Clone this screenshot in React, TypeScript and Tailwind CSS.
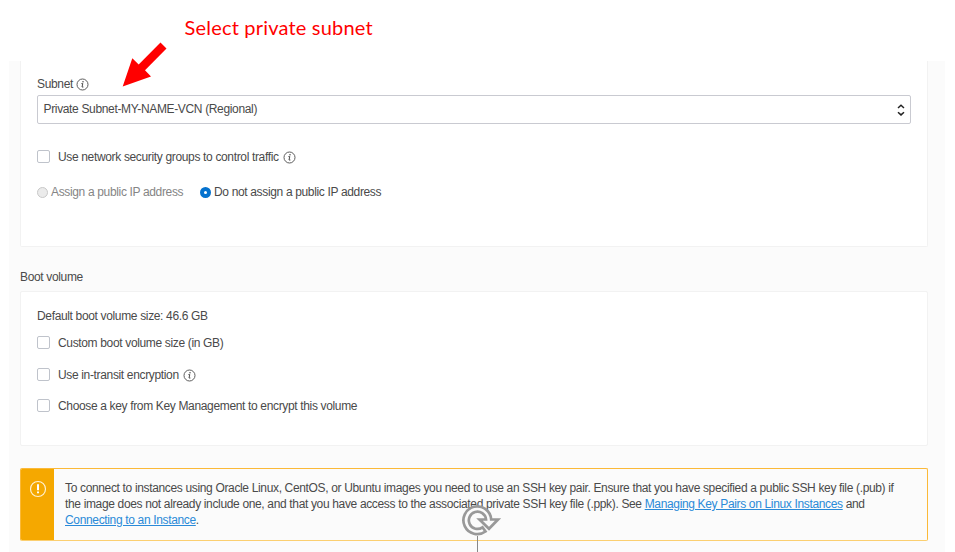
import type { ReactNode } from "react";

function InfoIcon() {
  return (
    <svg width="13" height="13" viewBox="0 0 13 13" className="mt-px shrink-0" fill="none">
      <circle cx="6.5" cy="6.5" r="5.5" stroke="#5c5c5c" strokeWidth="1" />
      <path d="M5.4 5.6H6.8L6 9H7.4" stroke="#4a4a4a" strokeWidth="1" />
      <circle cx="7" cy="3.7" r="0.75" fill="#4a4a4a" />
    </svg>
  );
}

function CheckRow({ children, info }: { children: ReactNode; info?: boolean }) {
  return (
    <label className="flex h-5 items-center">
      <span className="mr-2 mb-px size-[13px] shrink-0 rounded-[2px] border border-[#bfc3cb] bg-white" />
      <span className="mr-1">{children}</span>
      {info && <InfoIcon />}
    </label>
  );
}

function Link({ children }: { children: ReactNode }) {
  return (
    <a href="#" className="text-[#2a8ad8] underline">
      {children}
    </a>
  );
}

export default function App() {
  return (
    <div className="relative h-[552px] w-[955px] overflow-hidden bg-white font-['Liberation_Sans',Arial,sans-serif] text-[12px] tracking-[-0.345px] whitespace-nowrap text-[#4a4a4a]">
      <h1 className="h-[61px] pt-[14px] pl-[184.5px] font-['Lato',sans-serif] text-[20px] leading-[26px] tracking-[0.19px] text-[#ff0000]">
        Select private subnet
      </h1>

      <main className="ml-[9px] h-[491px] w-[936px] bg-[#fbfbfb] pl-[11px]">
        <section className="flex h-[186px] w-[908px] flex-col rounded-b-[2px] border border-t-0 border-[#f2f2f2] bg-white px-4 pt-[13px]">
          <div className="flex h-5 items-center gap-[3px]">
            <span>Subnet</span>
            <InfoIcon />
          </div>
          <div className="mt-px flex h-[29px] w-[874px] items-center justify-between rounded-[2px] border border-[#c9cad1] bg-white pr-[5px] pl-[5.5px]">
            <span className="mb-px">Private Subnet-MY-NAME-VCN (Regional)</span>
            <svg width="8" height="12" viewBox="0 0 8 12" fill="none" stroke="#222" strokeWidth="1.5">
              <path d="M1 4L4 1.3L7 4M1 8.2L4 10.9L7 8.2" />
            </svg>
          </div>
          <div className="mt-[23px]">
            <CheckRow info>Use network security groups to control traffic</CheckRow>
          </div>
          <div className="mt-[15px] flex h-5 items-center">
            <span className="mr-[3px] size-[11px] rounded-full border border-[#c8c8c8] bg-[#ebebeb]" />
            <span className="w-[149px] text-[#858585]">Assign a public IP address</span>
            <span className="mr-[3px] size-[11px] rounded-full border-4 border-[#0572ce] bg-white" />
            <span>Do not assign a public IP address</span>
          </div>
        </section>

        <h2 className="mt-5 h-6 leading-5">Boot volume</h2>

        <section className="h-[155px] w-[908px] rounded-[2px] border border-[#f2f2f2] bg-white px-4 pt-[14px]">
          <p className="h-5 leading-5">Default boot volume size: 46.6 GB</p>
          <div className="mt-[7px] flex flex-col gap-[11.5px]">
            <CheckRow>Custom boot volume size (in GB)</CheckRow>
            <CheckRow info>Use in-transit encryption</CheckRow>
            <CheckRow>Choose a key from Key Management to encrypt this volume</CheckRow>
          </div>
        </section>

        <section className="mt-[22px] flex h-[73px] w-[908px] overflow-hidden rounded-[2px] border border-[#fbb938] border-b-[#fbcf70]">
          <div className="w-[33px] shrink-0 bg-[#f5a800] pt-[11px] pl-2">
            <svg width="18" height="18" viewBox="0 0 18 18" fill="none" stroke="#fff1cf">
              <circle cx="9" cy="9" r="7.5" strokeWidth="1.2" />
              <path d="M9 4.2V10.2M9 11.5V13.2" stroke="#fff" strokeWidth="2" />
            </svg>
          </div>
          <p className="pt-[11px] pl-[11px] leading-4">
            To connect to instances using Oracle Linux, CentOS, or Ubuntu images you need to use an SSH key pair. Ensure that you have specified a public SSH key file (.pub) if
            <br />
            the image does not already include one, and that you have access to the associated private SSH key file (.ppk). See <Link>Managing Key Pairs on Linux Instances</Link> and
            <br />
            <Link>Connecting to an Instance</Link>.
          </p>
        </section>
      </main>

      <svg className="absolute top-[40px] left-[120px]" width="50" height="50" viewBox="120 40 50 50">
        <path d="M160.5 42.5L166.5 48.5L145 70.2L151 76.5L122.7 86.5L132.3 58.2L138.7 64.4Z" fill="#f00" />
      </svg>

      {/* Rotation handle with its stem */}
      <svg className="absolute top-[500px] left-[458px]" width="46" height="52" viewBox="458 500 46 52" fill="none">
        <path d="M477.5 536V552" stroke="#888" strokeWidth="1" />
        <circle cx="477.5" cy="520.5" r="10.5" fill="#fbfbfb" />
        <path d="M485.5 531.5A13.9 13.9 0 1 1 491.2 519.5H498L489 528.8L479.5 519.5H486A8.6 8.6 0 1 0 482.5 527.3Z" fill="#fbfbfb" stroke="#999" strokeWidth="2.7" />
      </svg>
    </div>
  );
}
